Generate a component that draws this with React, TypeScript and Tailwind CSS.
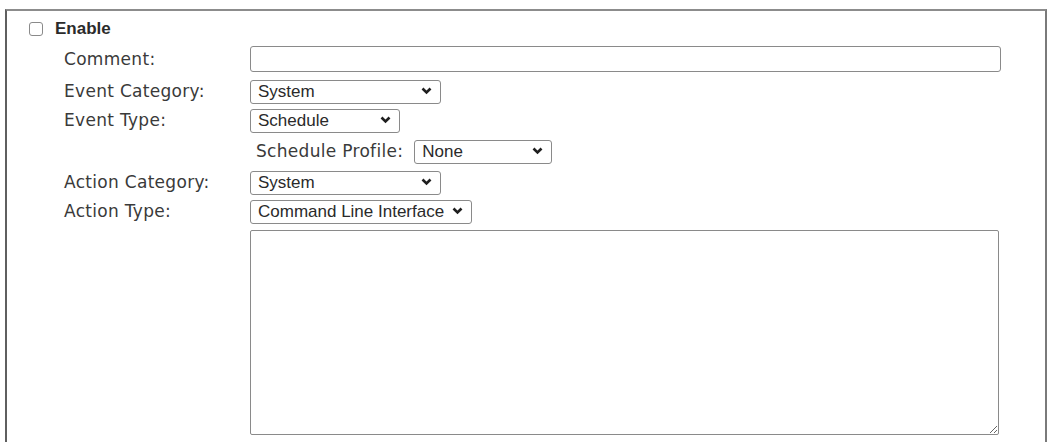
import { useState } from "react";

const labelFont = { fontFamily: '"DejaVu Sans", Verdana, sans-serif' };

function Chevron() {
  return (
    <svg width="11" height="8" viewBox="0 0 11 8" className="pointer-events-none absolute right-[9px] top-1/2 -translate-y-1/2">
      <path d="M1.5 1.5 L5.5 5.5 L9.5 1.5" fill="none" stroke="#1f1f1f" strokeWidth="2.6" />
    </svg>
  );
}

function Dropdown({ value, options, width }: { value: string; options: string[]; width: string }) {
  return (
    <div className={`relative h-[24px] ${width}`}>
      <select
        defaultValue={value}
        className="h-full w-full appearance-none rounded-[3px] border border-[#8a8a8a] bg-white pl-[7px] pr-6 text-[17px] leading-none text-[#2a2a2a] outline-none font-['Liberation_Sans',Arial,sans-serif]"
      >
        {options.map((o) => (
          <option key={o}>{o}</option>
        ))}
      </select>
      <Chevron />
    </div>
  );
}

function Label({ children }: { children: React.ReactNode }) {
  return (
    <span className="w-[186px] shrink-0 text-[17px] leading-[20px] tracking-[0.3px] text-[#3a3a3a]" style={labelFont}>
      {children}
    </span>
  );
}

export default function App() {
  const [enabled, setEnabled] = useState(false);

  return (
    <div className="h-[442px] w-[1051px] overflow-hidden bg-white pl-[5px] pt-[9px]">
      <div className="h-[460px] w-[1042px] border-l-2 border-t-2 border-r-2 border-l-[#5f5f5f] border-t-[#8c8c8c] border-r-[#7a7a7a] pl-[22px] pt-[11px]">
        <label className="flex h-[14px] items-center gap-[12px]">
          <input
            type="checkbox"
            checked={enabled}
            onChange={(e) => setEnabled(e.target.checked)}
            className="h-[14px] w-[14px] appearance-none rounded-[3px] border border-[#8a8a8a] bg-white"
          />
          <span className="text-[17px] leading-[20px] font-bold text-[#2b2b2b] font-['Liberation_Sans',Arial,sans-serif]">Enable</span>
        </label>

        <div className="mt-[10px] flex flex-col pl-[35px]">
          <div className="flex h-[26px] items-center">
            <Label>Comment:</Label>
            <input className="h-[26px] w-[751px] rounded-[3px] border border-[#8a8a8a] bg-white outline-none" />
          </div>

          <div className="mt-[7px] flex h-[24px] items-center">
            <Label>Event Category:</Label>
            <Dropdown value="System" options={["System", "Port", "Network"]} width="w-[191px]" />
          </div>

          <div className="mt-[5px] flex h-[24px] items-center">
            <Label>Event Type:</Label>
            <Dropdown value="Schedule" options={["Schedule", "Boot", "Login"]} width="w-[150px]" />
          </div>

          <div className="mt-[7px] flex h-[24px] items-center pl-[192px]">
            <span className="mr-[11px] text-[17px] leading-[20px] tracking-[0.3px] text-[#3a3a3a]" style={labelFont}>
              Schedule Profile:
            </span>
            <Dropdown value="None" options={["None", "Daily", "Weekly"]} width="w-[138px]" />
          </div>

          <div className="mt-[7px] flex h-[24px] items-center">
            <Label>Action Category:</Label>
            <Dropdown value="System" options={["System", "Port", "Network"]} width="w-[191px]" />
          </div>

          <div className="mt-[5px] flex h-[24px] items-center">
            <Label>Action Type:</Label>
            <Dropdown
              value="Command Line Interface"
              options={["Command Line Interface", "Reboot", "Send Email"]}
              width="w-[222px]"
            />
          </div>

          <div className="mt-[7px] flex">
            <span className="w-[186px] shrink-0" />
            <textarea className="h-[205px] w-[749px] rounded-[2px] border border-[#8a8a8a] bg-white outline-none" />
          </div>
        </div>
      </div>
    </div>
  );
}
